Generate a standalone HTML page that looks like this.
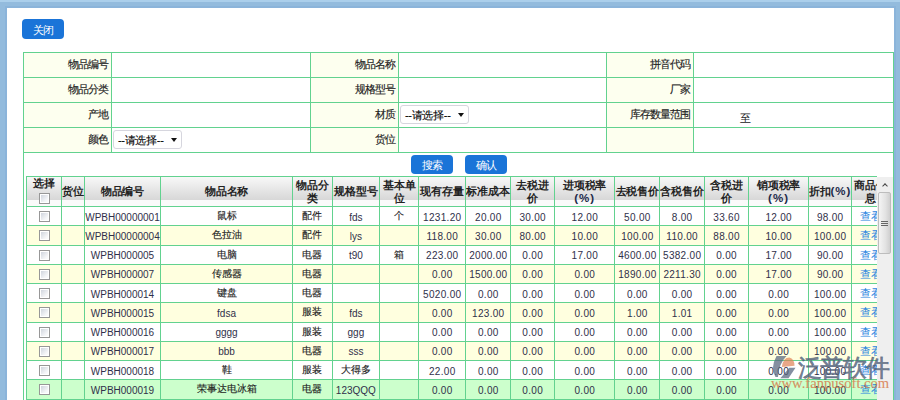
<!DOCTYPE html><html><head><meta charset="utf-8"><style>
*{margin:0;padding:0;box-sizing:border-box}
html,body{width:900px;height:400px;overflow:hidden}
body{position:relative;background:#93bbdd;font-family:"Liberation Sans",sans-serif;color:#333}
.a{position:absolute}
.hl{position:absolute;height:1px;background:#62d28f}
.vl{position:absolute;width:1px;background:#62d28f}
.btn{position:absolute;background:#1a74d8;border-radius:4px;color:#fff;font-size:11px;letter-spacing:-0.5px;padding-top:1px;text-align:center}
.lab{position:absolute;font-size:11px;letter-spacing:-1px;text-align:right;color:#222;-webkit-text-stroke:0.15px #222;white-space:nowrap}
.th{position:absolute;font-size:10.5px;letter-spacing:-0.15px;font-weight:bold;text-align:center;color:#222;line-height:13px;white-space:nowrap;overflow:hidden}
.td{position:absolute;font-size:10px;padding-top:1px;text-align:center;color:#30304a;white-space:nowrap;overflow:hidden}
.cj{position:relative;top:-1.5px;color:#1e1e1e;-webkit-text-stroke:0.15px #1e1e1e}
.pc{font-size:11.5px;letter-spacing:1px;color:#1c2a4a}
.cb{position:absolute;width:11px;height:11px;border:1px solid #979797;background:linear-gradient(135deg,#c9cfd9,#f6f7f9 70%,#fff);box-shadow:inset 0 0 0 1px #fff}
.sel{position:absolute;border:1px solid #d6d6de;border-radius:3px;background:#fff;font-size:11px;letter-spacing:-0.3px;color:#000;-webkit-text-stroke:0.1px #000;white-space:nowrap}
</style></head><body>
<div class="a" style="left:0;top:0;width:900px;height:2px;background:#abcfeb"></div>
<div class="a" style="left:5px;top:6px;width:891px;height:394px;background:#8bb4da"></div>
<div class="a" style="left:7px;top:8px;width:887px;height:392px;background:#fff"></div>
<div class="btn" style="left:22px;top:19px;width:42px;height:20px;line-height:20px">关闭</div>
<div class="a" style="left:23px;top:52px;width:88px;height:100px;background:#fdffef"></div>
<div class="a" style="left:310px;top:52px;width:88px;height:100px;background:#fdffef"></div>
<div class="a" style="left:606px;top:52px;width:87px;height:100px;background:#fdffef"></div>
<div class="hl" style="left:23px;top:52px;width:871px"></div>
<div class="hl" style="left:23px;top:77px;width:871px"></div>
<div class="hl" style="left:23px;top:102px;width:871px"></div>
<div class="hl" style="left:23px;top:127px;width:871px"></div>
<div class="hl" style="left:23px;top:152px;width:871px"></div>
<div class="vl" style="left:23px;top:52px;height:100px"></div>
<div class="vl" style="left:111px;top:52px;height:100px"></div>
<div class="vl" style="left:310px;top:52px;height:100px"></div>
<div class="vl" style="left:398px;top:52px;height:100px"></div>
<div class="vl" style="left:606px;top:52px;height:100px"></div>
<div class="vl" style="left:693px;top:52px;height:100px"></div>
<div class="vl" style="left:893px;top:52px;height:100px"></div>
<div class="vl" style="left:23px;top:152px;height:248px"></div>
<div class="vl" style="left:893px;top:152px;height:248px"></div>
<div class="lab" style="left:23px;top:52px;width:85px;height:24px;line-height:24px">物品编号</div>
<div class="lab" style="left:310px;top:52px;width:85px;height:24px;line-height:24px">物品名称</div>
<div class="lab" style="left:606px;top:52px;width:84px;height:24px;line-height:24px">拼音代码</div>
<div class="lab" style="left:23px;top:77px;width:85px;height:24px;line-height:24px">物品分类</div>
<div class="lab" style="left:310px;top:77px;width:85px;height:24px;line-height:24px">规格型号</div>
<div class="lab" style="left:606px;top:77px;width:84px;height:24px;line-height:24px">厂家</div>
<div class="lab" style="left:23px;top:102px;width:85px;height:24px;line-height:24px">产地</div>
<div class="lab" style="left:310px;top:102px;width:85px;height:24px;line-height:24px">材质</div>
<div class="lab" style="left:606px;top:102px;width:84px;height:24px;line-height:24px">库存数量范围</div>
<div class="lab" style="left:23px;top:127px;width:85px;height:24px;line-height:24px">颜色</div>
<div class="lab" style="left:310px;top:127px;width:85px;height:24px;line-height:24px">货位</div>
<div class="sel" style="left:400px;top:105px;width:69px;height:19px;line-height:19px;padding-left:4px">--请选择--<span class="a" style="right:4px;top:7px;width:0;height:0;border-left:3.5px solid transparent;border-right:3.5px solid transparent;border-top:4px solid #111"></span></div>
<div class="sel" style="left:113px;top:130px;width:69px;height:19px;line-height:19px;padding-left:4px">--请选择--<span class="a" style="right:4px;top:7px;width:0;height:0;border-left:3.5px solid transparent;border-right:3.5px solid transparent;border-top:4px solid #111"></span></div>
<div class="a" style="left:740px;top:111px;font-size:11px;color:#222">至</div>
<div class="btn" style="left:411px;top:155px;width:42px;height:19px;line-height:19px">搜索</div>
<div class="btn" style="left:465px;top:155px;width:42px;height:19px;line-height:19px">确认</div>
<div class="a" style="left:0;top:0;width:877px;height:400px;overflow:hidden">
<div class="a" style="left:26px;top:177px;width:851px;height:23px;background:linear-gradient(#f8f8f8,#d7d7d7)"></div>
<div class="a" style="left:26px;top:200px;width:851px;height:6px;background:#fafafa"></div>
<div class="a" style="left:26px;top:206.60px;width:851px;height:19.26px;background:#ffffff"></div>
<div class="a" style="left:26px;top:225.86px;width:851px;height:19.26px;background:#ffffdf"></div>
<div class="a" style="left:26px;top:245.12px;width:851px;height:19.26px;background:#ffffff"></div>
<div class="a" style="left:26px;top:264.38px;width:851px;height:19.26px;background:#ffffdf"></div>
<div class="a" style="left:26px;top:283.64px;width:851px;height:19.26px;background:#ffffff"></div>
<div class="a" style="left:26px;top:302.90px;width:851px;height:19.26px;background:#ffffdf"></div>
<div class="a" style="left:26px;top:322.16px;width:851px;height:19.26px;background:#ffffff"></div>
<div class="a" style="left:26px;top:341.42px;width:851px;height:19.26px;background:#ffffdf"></div>
<div class="a" style="left:26px;top:360.68px;width:851px;height:19.26px;background:#ffffff"></div>
<div class="a" style="left:26px;top:379.94px;width:851px;height:19.26px;background:#ccffcc"></div>
<div class="hl" style="left:26px;top:176px;width:851px"></div>
<div class="hl" style="left:26px;top:206px;width:851px"></div>
<div class="hl" style="left:26px;top:225px;width:851px"></div>
<div class="hl" style="left:26px;top:245px;width:851px"></div>
<div class="hl" style="left:26px;top:264px;width:851px"></div>
<div class="hl" style="left:26px;top:283px;width:851px"></div>
<div class="hl" style="left:26px;top:302px;width:851px"></div>
<div class="hl" style="left:26px;top:322px;width:851px"></div>
<div class="hl" style="left:26px;top:341px;width:851px"></div>
<div class="hl" style="left:26px;top:360px;width:851px"></div>
<div class="hl" style="left:26px;top:379px;width:851px"></div>
<div class="hl" style="left:26px;top:399px;width:851px"></div>
<div class="vl" style="left:26px;top:177px;height:223px"></div>
<div class="vl" style="left:61px;top:177px;height:223px"></div>
<div class="vl" style="left:84px;top:177px;height:223px"></div>
<div class="vl" style="left:160px;top:177px;height:223px"></div>
<div class="vl" style="left:292px;top:177px;height:223px"></div>
<div class="vl" style="left:332px;top:177px;height:223px"></div>
<div class="vl" style="left:379px;top:177px;height:223px"></div>
<div class="vl" style="left:418px;top:177px;height:223px"></div>
<div class="vl" style="left:465px;top:177px;height:223px"></div>
<div class="vl" style="left:510px;top:177px;height:223px"></div>
<div class="vl" style="left:554px;top:177px;height:223px"></div>
<div class="vl" style="left:614px;top:177px;height:223px"></div>
<div class="vl" style="left:659px;top:177px;height:223px"></div>
<div class="vl" style="left:704px;top:177px;height:223px"></div>
<div class="vl" style="left:748px;top:177px;height:223px"></div>
<div class="vl" style="left:808px;top:177px;height:223px"></div>
<div class="vl" style="left:851px;top:177px;height:223px"></div>
<div class="th" style="left:26.4px;top:177px;width:35.0px">选择</div>
<div class="cb" style="left:39px;top:193px"></div>
<div class="th" style="left:61.4px;top:177px;width:23.2px;height:29px;display:flex;align-items:center;justify-content:center"><div>货位</div></div>
<div class="th" style="left:84.6px;top:177px;width:75.8px;height:29px;display:flex;align-items:center;justify-content:center"><div>物品编号</div></div>
<div class="th" style="left:160.4px;top:177px;width:132.3px;height:29px;display:flex;align-items:center;justify-content:center"><div>物品名称</div></div>
<div class="th" style="left:292.7px;top:177px;width:39.5px;height:29px;display:flex;align-items:center;justify-content:center"><div>物品分<br>类</div></div>
<div class="th" style="left:332.2px;top:177px;width:47.4px;height:29px;display:flex;align-items:center;justify-content:center"><div>规格型号</div></div>
<div class="th" style="left:379.6px;top:177px;width:39.0px;height:29px;display:flex;align-items:center;justify-content:center"><div>基本单<br>位</div></div>
<div class="th" style="left:418.6px;top:177px;width:47.0px;height:29px;display:flex;align-items:center;justify-content:center"><div>现有存量</div></div>
<div class="th" style="left:465.6px;top:177px;width:45.1px;height:29px;display:flex;align-items:center;justify-content:center"><div>标准成本</div></div>
<div class="th" style="left:510.7px;top:177px;width:43.7px;height:29px;display:flex;align-items:center;justify-content:center"><div>去税进<br>价</div></div>
<div class="th" style="left:554.4px;top:177px;width:60.5px;height:29px;display:flex;align-items:center;justify-content:center"><div>进项税率<br><span class=pc>(%)</span></div></div>
<div class="th" style="left:614.9px;top:177px;width:44.7px;height:29px;display:flex;align-items:center;justify-content:center"><div>去税售价</div></div>
<div class="th" style="left:659.6px;top:177px;width:44.8px;height:29px;display:flex;align-items:center;justify-content:center"><div>含税售价</div></div>
<div class="th" style="left:704.4px;top:177px;width:44.1px;height:29px;display:flex;align-items:center;justify-content:center"><div>含税进<br>价</div></div>
<div class="th" style="left:748.5px;top:177px;width:60.1px;height:29px;display:flex;align-items:center;justify-content:center"><div>销项税率<br><span class=pc>(%)</span></div></div>
<div class="th" style="left:808.6px;top:177px;width:42.8px;height:29px;display:flex;align-items:center;justify-content:center"><div>折扣<span class=pc>(%)</span></div></div>
<div class="th" style="left:851.4px;top:177px;width:38.6px;height:29px;display:flex;align-items:center;justify-content:center"><div>商品信<br>息</div></div>
<div class="cb" style="left:39px;top:211.1px"></div>
<div class="td" style="left:84.6px;top:206.60px;width:75.8px;height:19.26px;line-height:19.26px">WPBH00000001</div>
<div class="td" style="left:160.4px;top:206.60px;width:132.3px;height:19.26px;line-height:19.26px"><span class=cj>鼠标</span></div>
<div class="td" style="left:292.7px;top:206.60px;width:39.5px;height:19.26px;line-height:19.26px"><span class=cj>配件</span></div>
<div class="td" style="left:332.2px;top:206.60px;width:47.4px;height:19.26px;line-height:19.26px">fds</div>
<div class="td" style="left:379.6px;top:206.60px;width:39.0px;height:19.26px;line-height:19.26px"><span class=cj>个</span></div>
<div class="td" style="left:418.6px;top:206.60px;width:47.0px;height:19.26px;line-height:19.26px;letter-spacing:0.3px;text-indent:0.3px">1231.20</div>
<div class="td" style="left:465.6px;top:206.60px;width:45.1px;height:19.26px;line-height:19.26px;letter-spacing:0.3px;text-indent:0.3px">20.00</div>
<div class="td" style="left:510.7px;top:206.60px;width:43.7px;height:19.26px;line-height:19.26px;letter-spacing:0.3px;text-indent:0.3px">30.00</div>
<div class="td" style="left:554.4px;top:206.60px;width:60.5px;height:19.26px;line-height:19.26px;letter-spacing:0.3px;text-indent:0.3px">12.00</div>
<div class="td" style="left:614.9px;top:206.60px;width:44.7px;height:19.26px;line-height:19.26px;letter-spacing:0.3px;text-indent:0.3px">50.00</div>
<div class="td" style="left:659.6px;top:206.60px;width:44.8px;height:19.26px;line-height:19.26px;letter-spacing:0.3px;text-indent:0.3px">8.00</div>
<div class="td" style="left:704.4px;top:206.60px;width:44.1px;height:19.26px;line-height:19.26px;letter-spacing:0.3px;text-indent:0.3px">33.60</div>
<div class="td" style="left:748.5px;top:206.60px;width:60.1px;height:19.26px;line-height:19.26px;letter-spacing:0.3px;text-indent:0.3px">12.00</div>
<div class="td" style="left:808.6px;top:206.60px;width:42.8px;height:19.26px;line-height:19.26px;letter-spacing:0.3px;text-indent:0.3px">98.00</div>
<div class="td" style="left:851.4px;top:207.10px;width:40px;height:19.26px;line-height:19.26px;color:#2a84e0;text-align:left;padding:0 0 0 9px;font-size:11px">查看</div>
<div class="cb" style="left:39px;top:230.4px"></div>
<div class="td" style="left:84.6px;top:225.86px;width:75.8px;height:19.26px;line-height:19.26px">WPBH00000004</div>
<div class="td" style="left:160.4px;top:225.86px;width:132.3px;height:19.26px;line-height:19.26px"><span class=cj>色拉油</span></div>
<div class="td" style="left:292.7px;top:225.86px;width:39.5px;height:19.26px;line-height:19.26px"><span class=cj>配件</span></div>
<div class="td" style="left:332.2px;top:225.86px;width:47.4px;height:19.26px;line-height:19.26px">lys</div>
<div class="td" style="left:418.6px;top:225.86px;width:47.0px;height:19.26px;line-height:19.26px;letter-spacing:0.3px;text-indent:0.3px">118.00</div>
<div class="td" style="left:465.6px;top:225.86px;width:45.1px;height:19.26px;line-height:19.26px;letter-spacing:0.3px;text-indent:0.3px">30.00</div>
<div class="td" style="left:510.7px;top:225.86px;width:43.7px;height:19.26px;line-height:19.26px;letter-spacing:0.3px;text-indent:0.3px">80.00</div>
<div class="td" style="left:554.4px;top:225.86px;width:60.5px;height:19.26px;line-height:19.26px;letter-spacing:0.3px;text-indent:0.3px">10.00</div>
<div class="td" style="left:614.9px;top:225.86px;width:44.7px;height:19.26px;line-height:19.26px;letter-spacing:0.3px;text-indent:0.3px">100.00</div>
<div class="td" style="left:659.6px;top:225.86px;width:44.8px;height:19.26px;line-height:19.26px;letter-spacing:0.3px;text-indent:0.3px">110.00</div>
<div class="td" style="left:704.4px;top:225.86px;width:44.1px;height:19.26px;line-height:19.26px;letter-spacing:0.3px;text-indent:0.3px">88.00</div>
<div class="td" style="left:748.5px;top:225.86px;width:60.1px;height:19.26px;line-height:19.26px;letter-spacing:0.3px;text-indent:0.3px">10.00</div>
<div class="td" style="left:808.6px;top:225.86px;width:42.8px;height:19.26px;line-height:19.26px;letter-spacing:0.3px;text-indent:0.3px">100.00</div>
<div class="td" style="left:851.4px;top:226.36px;width:40px;height:19.26px;line-height:19.26px;color:#2a84e0;text-align:left;padding:0 0 0 9px;font-size:11px">查看</div>
<div class="cb" style="left:39px;top:249.6px"></div>
<div class="td" style="left:84.6px;top:245.12px;width:75.8px;height:19.26px;line-height:19.26px">WPBH000005</div>
<div class="td" style="left:160.4px;top:245.12px;width:132.3px;height:19.26px;line-height:19.26px"><span class=cj>电脑</span></div>
<div class="td" style="left:292.7px;top:245.12px;width:39.5px;height:19.26px;line-height:19.26px"><span class=cj>电器</span></div>
<div class="td" style="left:332.2px;top:245.12px;width:47.4px;height:19.26px;line-height:19.26px">t90</div>
<div class="td" style="left:379.6px;top:245.12px;width:39.0px;height:19.26px;line-height:19.26px"><span class=cj>箱</span></div>
<div class="td" style="left:418.6px;top:245.12px;width:47.0px;height:19.26px;line-height:19.26px;letter-spacing:0.3px;text-indent:0.3px">223.00</div>
<div class="td" style="left:465.6px;top:245.12px;width:45.1px;height:19.26px;line-height:19.26px;letter-spacing:0.3px;text-indent:0.3px">2000.00</div>
<div class="td" style="left:510.7px;top:245.12px;width:43.7px;height:19.26px;line-height:19.26px;letter-spacing:0.3px;text-indent:0.3px">0.00</div>
<div class="td" style="left:554.4px;top:245.12px;width:60.5px;height:19.26px;line-height:19.26px;letter-spacing:0.3px;text-indent:0.3px">17.00</div>
<div class="td" style="left:614.9px;top:245.12px;width:44.7px;height:19.26px;line-height:19.26px;letter-spacing:0.3px;text-indent:0.3px">4600.00</div>
<div class="td" style="left:659.6px;top:245.12px;width:44.8px;height:19.26px;line-height:19.26px;letter-spacing:0.3px;text-indent:0.3px">5382.00</div>
<div class="td" style="left:704.4px;top:245.12px;width:44.1px;height:19.26px;line-height:19.26px;letter-spacing:0.3px;text-indent:0.3px">0.00</div>
<div class="td" style="left:748.5px;top:245.12px;width:60.1px;height:19.26px;line-height:19.26px;letter-spacing:0.3px;text-indent:0.3px">17.00</div>
<div class="td" style="left:808.6px;top:245.12px;width:42.8px;height:19.26px;line-height:19.26px;letter-spacing:0.3px;text-indent:0.3px">90.00</div>
<div class="td" style="left:851.4px;top:245.62px;width:40px;height:19.26px;line-height:19.26px;color:#2a84e0;text-align:left;padding:0 0 0 9px;font-size:11px">查看</div>
<div class="cb" style="left:39px;top:268.9px"></div>
<div class="td" style="left:84.6px;top:264.38px;width:75.8px;height:19.26px;line-height:19.26px">WPBH000007</div>
<div class="td" style="left:160.4px;top:264.38px;width:132.3px;height:19.26px;line-height:19.26px"><span class=cj>传感器</span></div>
<div class="td" style="left:292.7px;top:264.38px;width:39.5px;height:19.26px;line-height:19.26px"><span class=cj>电器</span></div>
<div class="td" style="left:418.6px;top:264.38px;width:47.0px;height:19.26px;line-height:19.26px;letter-spacing:0.3px;text-indent:0.3px">0.00</div>
<div class="td" style="left:465.6px;top:264.38px;width:45.1px;height:19.26px;line-height:19.26px;letter-spacing:0.3px;text-indent:0.3px">1500.00</div>
<div class="td" style="left:510.7px;top:264.38px;width:43.7px;height:19.26px;line-height:19.26px;letter-spacing:0.3px;text-indent:0.3px">0.00</div>
<div class="td" style="left:554.4px;top:264.38px;width:60.5px;height:19.26px;line-height:19.26px;letter-spacing:0.3px;text-indent:0.3px">0.00</div>
<div class="td" style="left:614.9px;top:264.38px;width:44.7px;height:19.26px;line-height:19.26px;letter-spacing:0.3px;text-indent:0.3px">1890.00</div>
<div class="td" style="left:659.6px;top:264.38px;width:44.8px;height:19.26px;line-height:19.26px;letter-spacing:0.3px;text-indent:0.3px">2211.30</div>
<div class="td" style="left:704.4px;top:264.38px;width:44.1px;height:19.26px;line-height:19.26px;letter-spacing:0.3px;text-indent:0.3px">0.00</div>
<div class="td" style="left:748.5px;top:264.38px;width:60.1px;height:19.26px;line-height:19.26px;letter-spacing:0.3px;text-indent:0.3px">17.00</div>
<div class="td" style="left:808.6px;top:264.38px;width:42.8px;height:19.26px;line-height:19.26px;letter-spacing:0.3px;text-indent:0.3px">90.00</div>
<div class="td" style="left:851.4px;top:264.88px;width:40px;height:19.26px;line-height:19.26px;color:#2a84e0;text-align:left;padding:0 0 0 9px;font-size:11px">查看</div>
<div class="cb" style="left:39px;top:288.1px"></div>
<div class="td" style="left:84.6px;top:283.64px;width:75.8px;height:19.26px;line-height:19.26px">WPBH000014</div>
<div class="td" style="left:160.4px;top:283.64px;width:132.3px;height:19.26px;line-height:19.26px"><span class=cj>键盘</span></div>
<div class="td" style="left:292.7px;top:283.64px;width:39.5px;height:19.26px;line-height:19.26px"><span class=cj>电器</span></div>
<div class="td" style="left:418.6px;top:283.64px;width:47.0px;height:19.26px;line-height:19.26px;letter-spacing:0.3px;text-indent:0.3px">5020.00</div>
<div class="td" style="left:465.6px;top:283.64px;width:45.1px;height:19.26px;line-height:19.26px;letter-spacing:0.3px;text-indent:0.3px">0.00</div>
<div class="td" style="left:510.7px;top:283.64px;width:43.7px;height:19.26px;line-height:19.26px;letter-spacing:0.3px;text-indent:0.3px">0.00</div>
<div class="td" style="left:554.4px;top:283.64px;width:60.5px;height:19.26px;line-height:19.26px;letter-spacing:0.3px;text-indent:0.3px">0.00</div>
<div class="td" style="left:614.9px;top:283.64px;width:44.7px;height:19.26px;line-height:19.26px;letter-spacing:0.3px;text-indent:0.3px">0.00</div>
<div class="td" style="left:659.6px;top:283.64px;width:44.8px;height:19.26px;line-height:19.26px;letter-spacing:0.3px;text-indent:0.3px">0.00</div>
<div class="td" style="left:704.4px;top:283.64px;width:44.1px;height:19.26px;line-height:19.26px;letter-spacing:0.3px;text-indent:0.3px">0.00</div>
<div class="td" style="left:748.5px;top:283.64px;width:60.1px;height:19.26px;line-height:19.26px;letter-spacing:0.3px;text-indent:0.3px">0.00</div>
<div class="td" style="left:808.6px;top:283.64px;width:42.8px;height:19.26px;line-height:19.26px;letter-spacing:0.3px;text-indent:0.3px">100.00</div>
<div class="td" style="left:851.4px;top:284.14px;width:40px;height:19.26px;line-height:19.26px;color:#2a84e0;text-align:left;padding:0 0 0 9px;font-size:11px">查看</div>
<div class="cb" style="left:39px;top:307.4px"></div>
<div class="td" style="left:84.6px;top:302.90px;width:75.8px;height:19.26px;line-height:19.26px">WPBH000015</div>
<div class="td" style="left:160.4px;top:302.90px;width:132.3px;height:19.26px;line-height:19.26px">fdsa</div>
<div class="td" style="left:292.7px;top:302.90px;width:39.5px;height:19.26px;line-height:19.26px"><span class=cj>服装</span></div>
<div class="td" style="left:332.2px;top:302.90px;width:47.4px;height:19.26px;line-height:19.26px">fds</div>
<div class="td" style="left:418.6px;top:302.90px;width:47.0px;height:19.26px;line-height:19.26px;letter-spacing:0.3px;text-indent:0.3px">0.00</div>
<div class="td" style="left:465.6px;top:302.90px;width:45.1px;height:19.26px;line-height:19.26px;letter-spacing:0.3px;text-indent:0.3px">123.00</div>
<div class="td" style="left:510.7px;top:302.90px;width:43.7px;height:19.26px;line-height:19.26px;letter-spacing:0.3px;text-indent:0.3px">0.00</div>
<div class="td" style="left:554.4px;top:302.90px;width:60.5px;height:19.26px;line-height:19.26px;letter-spacing:0.3px;text-indent:0.3px">0.00</div>
<div class="td" style="left:614.9px;top:302.90px;width:44.7px;height:19.26px;line-height:19.26px;letter-spacing:0.3px;text-indent:0.3px">1.00</div>
<div class="td" style="left:659.6px;top:302.90px;width:44.8px;height:19.26px;line-height:19.26px;letter-spacing:0.3px;text-indent:0.3px">1.01</div>
<div class="td" style="left:704.4px;top:302.90px;width:44.1px;height:19.26px;line-height:19.26px;letter-spacing:0.3px;text-indent:0.3px">0.00</div>
<div class="td" style="left:748.5px;top:302.90px;width:60.1px;height:19.26px;line-height:19.26px;letter-spacing:0.3px;text-indent:0.3px">0.00</div>
<div class="td" style="left:808.6px;top:302.90px;width:42.8px;height:19.26px;line-height:19.26px;letter-spacing:0.3px;text-indent:0.3px">100.00</div>
<div class="td" style="left:851.4px;top:303.40px;width:40px;height:19.26px;line-height:19.26px;color:#2a84e0;text-align:left;padding:0 0 0 9px;font-size:11px">查看</div>
<div class="cb" style="left:39px;top:326.7px"></div>
<div class="td" style="left:84.6px;top:322.16px;width:75.8px;height:19.26px;line-height:19.26px">WPBH000016</div>
<div class="td" style="left:160.4px;top:322.16px;width:132.3px;height:19.26px;line-height:19.26px">gggg</div>
<div class="td" style="left:292.7px;top:322.16px;width:39.5px;height:19.26px;line-height:19.26px"><span class=cj>服装</span></div>
<div class="td" style="left:332.2px;top:322.16px;width:47.4px;height:19.26px;line-height:19.26px">ggg</div>
<div class="td" style="left:418.6px;top:322.16px;width:47.0px;height:19.26px;line-height:19.26px;letter-spacing:0.3px;text-indent:0.3px">0.00</div>
<div class="td" style="left:465.6px;top:322.16px;width:45.1px;height:19.26px;line-height:19.26px;letter-spacing:0.3px;text-indent:0.3px">0.00</div>
<div class="td" style="left:510.7px;top:322.16px;width:43.7px;height:19.26px;line-height:19.26px;letter-spacing:0.3px;text-indent:0.3px">0.00</div>
<div class="td" style="left:554.4px;top:322.16px;width:60.5px;height:19.26px;line-height:19.26px;letter-spacing:0.3px;text-indent:0.3px">0.00</div>
<div class="td" style="left:614.9px;top:322.16px;width:44.7px;height:19.26px;line-height:19.26px;letter-spacing:0.3px;text-indent:0.3px">0.00</div>
<div class="td" style="left:659.6px;top:322.16px;width:44.8px;height:19.26px;line-height:19.26px;letter-spacing:0.3px;text-indent:0.3px">0.00</div>
<div class="td" style="left:704.4px;top:322.16px;width:44.1px;height:19.26px;line-height:19.26px;letter-spacing:0.3px;text-indent:0.3px">0.00</div>
<div class="td" style="left:748.5px;top:322.16px;width:60.1px;height:19.26px;line-height:19.26px;letter-spacing:0.3px;text-indent:0.3px">0.00</div>
<div class="td" style="left:808.6px;top:322.16px;width:42.8px;height:19.26px;line-height:19.26px;letter-spacing:0.3px;text-indent:0.3px">100.00</div>
<div class="td" style="left:851.4px;top:322.66px;width:40px;height:19.26px;line-height:19.26px;color:#2a84e0;text-align:left;padding:0 0 0 9px;font-size:11px">查看</div>
<div class="cb" style="left:39px;top:345.9px"></div>
<div class="td" style="left:84.6px;top:341.42px;width:75.8px;height:19.26px;line-height:19.26px">WPBH000017</div>
<div class="td" style="left:160.4px;top:341.42px;width:132.3px;height:19.26px;line-height:19.26px">bbb</div>
<div class="td" style="left:292.7px;top:341.42px;width:39.5px;height:19.26px;line-height:19.26px"><span class=cj>电器</span></div>
<div class="td" style="left:332.2px;top:341.42px;width:47.4px;height:19.26px;line-height:19.26px">sss</div>
<div class="td" style="left:418.6px;top:341.42px;width:47.0px;height:19.26px;line-height:19.26px;letter-spacing:0.3px;text-indent:0.3px">0.00</div>
<div class="td" style="left:465.6px;top:341.42px;width:45.1px;height:19.26px;line-height:19.26px;letter-spacing:0.3px;text-indent:0.3px">0.00</div>
<div class="td" style="left:510.7px;top:341.42px;width:43.7px;height:19.26px;line-height:19.26px;letter-spacing:0.3px;text-indent:0.3px">0.00</div>
<div class="td" style="left:554.4px;top:341.42px;width:60.5px;height:19.26px;line-height:19.26px;letter-spacing:0.3px;text-indent:0.3px">0.00</div>
<div class="td" style="left:614.9px;top:341.42px;width:44.7px;height:19.26px;line-height:19.26px;letter-spacing:0.3px;text-indent:0.3px">0.00</div>
<div class="td" style="left:659.6px;top:341.42px;width:44.8px;height:19.26px;line-height:19.26px;letter-spacing:0.3px;text-indent:0.3px">0.00</div>
<div class="td" style="left:704.4px;top:341.42px;width:44.1px;height:19.26px;line-height:19.26px;letter-spacing:0.3px;text-indent:0.3px">0.00</div>
<div class="td" style="left:748.5px;top:341.42px;width:60.1px;height:19.26px;line-height:19.26px;letter-spacing:0.3px;text-indent:0.3px">0.00</div>
<div class="td" style="left:808.6px;top:341.42px;width:42.8px;height:19.26px;line-height:19.26px;letter-spacing:0.3px;text-indent:0.3px">100.00</div>
<div class="td" style="left:851.4px;top:341.92px;width:40px;height:19.26px;line-height:19.26px;color:#2a84e0;text-align:left;padding:0 0 0 9px;font-size:11px">查看</div>
<div class="cb" style="left:39px;top:365.2px"></div>
<div class="td" style="left:84.6px;top:360.68px;width:75.8px;height:19.26px;line-height:19.26px">WPBH000018</div>
<div class="td" style="left:160.4px;top:360.68px;width:132.3px;height:19.26px;line-height:19.26px"><span class=cj>鞋</span></div>
<div class="td" style="left:292.7px;top:360.68px;width:39.5px;height:19.26px;line-height:19.26px"><span class=cj>服装</span></div>
<div class="td" style="left:332.2px;top:360.68px;width:47.4px;height:19.26px;line-height:19.26px"><span class=cj>大得多</span></div>
<div class="td" style="left:418.6px;top:360.68px;width:47.0px;height:19.26px;line-height:19.26px;letter-spacing:0.3px;text-indent:0.3px">22.00</div>
<div class="td" style="left:465.6px;top:360.68px;width:45.1px;height:19.26px;line-height:19.26px;letter-spacing:0.3px;text-indent:0.3px">0.00</div>
<div class="td" style="left:510.7px;top:360.68px;width:43.7px;height:19.26px;line-height:19.26px;letter-spacing:0.3px;text-indent:0.3px">0.00</div>
<div class="td" style="left:554.4px;top:360.68px;width:60.5px;height:19.26px;line-height:19.26px;letter-spacing:0.3px;text-indent:0.3px">0.00</div>
<div class="td" style="left:614.9px;top:360.68px;width:44.7px;height:19.26px;line-height:19.26px;letter-spacing:0.3px;text-indent:0.3px">0.00</div>
<div class="td" style="left:659.6px;top:360.68px;width:44.8px;height:19.26px;line-height:19.26px;letter-spacing:0.3px;text-indent:0.3px">0.00</div>
<div class="td" style="left:704.4px;top:360.68px;width:44.1px;height:19.26px;line-height:19.26px;letter-spacing:0.3px;text-indent:0.3px">0.00</div>
<div class="td" style="left:748.5px;top:360.68px;width:60.1px;height:19.26px;line-height:19.26px;letter-spacing:0.3px;text-indent:0.3px">0.00</div>
<div class="td" style="left:808.6px;top:360.68px;width:42.8px;height:19.26px;line-height:19.26px;letter-spacing:0.3px;text-indent:0.3px">100.00</div>
<div class="td" style="left:851.4px;top:361.18px;width:40px;height:19.26px;line-height:19.26px;color:#2a84e0;text-align:left;padding:0 0 0 9px;font-size:11px">查看</div>
<div class="cb" style="left:39px;top:384.4px"></div>
<div class="td" style="left:84.6px;top:379.94px;width:75.8px;height:19.26px;line-height:19.26px">WPBH000019</div>
<div class="td" style="left:160.4px;top:379.94px;width:132.3px;height:19.26px;line-height:19.26px"><span class=cj>荣事达电冰箱</span></div>
<div class="td" style="left:292.7px;top:379.94px;width:39.5px;height:19.26px;line-height:19.26px"><span class=cj>电器</span></div>
<div class="td" style="left:332.2px;top:379.94px;width:47.4px;height:19.26px;line-height:19.26px">123QQQ</div>
<div class="td" style="left:418.6px;top:379.94px;width:47.0px;height:19.26px;line-height:19.26px;letter-spacing:0.3px;text-indent:0.3px">0.00</div>
<div class="td" style="left:465.6px;top:379.94px;width:45.1px;height:19.26px;line-height:19.26px;letter-spacing:0.3px;text-indent:0.3px">0.00</div>
<div class="td" style="left:510.7px;top:379.94px;width:43.7px;height:19.26px;line-height:19.26px;letter-spacing:0.3px;text-indent:0.3px">0.00</div>
<div class="td" style="left:554.4px;top:379.94px;width:60.5px;height:19.26px;line-height:19.26px;letter-spacing:0.3px;text-indent:0.3px">0.00</div>
<div class="td" style="left:614.9px;top:379.94px;width:44.7px;height:19.26px;line-height:19.26px;letter-spacing:0.3px;text-indent:0.3px">0.00</div>
<div class="td" style="left:659.6px;top:379.94px;width:44.8px;height:19.26px;line-height:19.26px;letter-spacing:0.3px;text-indent:0.3px">0.00</div>
<div class="td" style="left:704.4px;top:379.94px;width:44.1px;height:19.26px;line-height:19.26px;letter-spacing:0.3px;text-indent:0.3px">0.00</div>
<div class="td" style="left:748.5px;top:379.94px;width:60.1px;height:19.26px;line-height:19.26px;letter-spacing:0.3px;text-indent:0.3px">0.00</div>
<div class="td" style="left:808.6px;top:379.94px;width:42.8px;height:19.26px;line-height:19.26px;letter-spacing:0.3px;text-indent:0.3px">100.00</div>
<div class="td" style="left:851.4px;top:380.44px;width:40px;height:19.26px;line-height:19.26px;color:#2a84e0;text-align:left;padding:0 0 0 9px;font-size:11px">查看</div>
</div>
<div class="a" style="left:877px;top:177px;width:16px;height:223px;background:#efefef"></div>
<div class="a" style="left:878px;top:192px;width:13px;height:62px;border:1px solid #bdbdbd;border-radius:2px;background:linear-gradient(90deg,#f4f4f4,#e2e2e2 60%,#cfcfcf)"></div>
<div class="a" style="left:882.5px;top:183.5px;width:4px;height:4px;border-left:1.5px solid #444;border-top:1.5px solid #444;transform:rotate(45deg)"></div>
<div class="a" style="left:881px;top:221px;width:7px;height:1px;background:#666"></div>
<div class="a" style="left:881px;top:223px;width:7px;height:1px;background:#666"></div>
<div class="a" style="left:881px;top:225px;width:7px;height:1px;background:#666"></div>
<svg class="a" style="left:766px;top:352px" width="36" height="30" viewBox="0 0 36 30"><path d="M10.5 4 L20.5 4 Q12.5 12 12 25 L9.5 25 Q4 16 10.5 4 Z" fill="rgba(85,100,125,0.72)"/><path d="M23.3 15.8 L29.5 15.8 L22.5 26.3 L14.3 26.3 Z" fill="rgba(85,100,125,0.72)"/><path d="M15.8 15 Q17 5.4 23.3 5.4 Q28.5 6.5 28.5 13.8 Z" fill="rgba(222,125,80,0.68)"/></svg>
<div class="a" style="left:797.5px;top:350.5px;font-size:24px;font-weight:normal;line-height:34px;color:rgba(80,95,120,0.75);-webkit-text-stroke:0.7px rgba(80,95,120,0.75);letter-spacing:-1.2px;white-space:nowrap">泛普软件</div>
<div class="a" style="left:771px;top:374px;font-family:'Liberation Serif',serif;font-size:14.6px;line-height:18px;color:rgba(215,118,70,0.8);-webkit-text-stroke:0.2px rgba(215,118,70,0.5);white-space:nowrap">www.fanpusoft.com</div>
</body></html>
